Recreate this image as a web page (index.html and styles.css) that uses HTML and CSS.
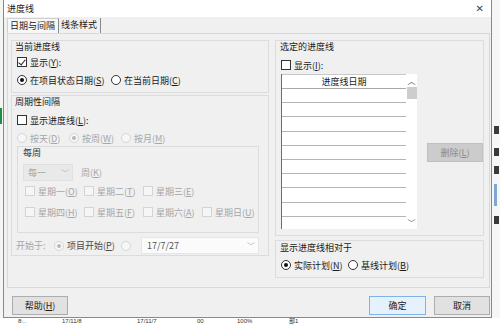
FILE: index.html
```html
<!DOCTYPE html>
<html lang="zh-CN">
<head>
    <meta charset="UTF-8">
    <title>进度线</title>
    <link rel="stylesheet" href="styles.css">
</head>
<body>

<div class="screen">
    <!-- 背景表格左侧 -->
    <div class="sheet-left"><span class="sel-mark"></span></div>

    <!-- 对话框 -->
    <div class="dialog">
        <div class="titlebar">
            <span>进度线</span>
            <span class="close">✕</span>
        </div>

        <div class="dlg-body">
            <div class="tabs">
                <div class="tab active">日期与间隔</div>
                <div class="tab">线条样式</div>
            </div>

            <div class="panel">
                <div class="col-left">
                    <div class="group g-current">
                        <div class="g-title">当前进度线</div>
                        <div class="row r-show"><span class="cb checked"></span>显示(<u>Y</u>):</div>
                        <div class="row r-date">
                            <span class="opt w94"><span class="rb on"></span>在项目状态日期(<u>S</u>)</span>
                            <span class="opt"><span class="rb"></span>在当前日期(<u>C</u>)</span>
                        </div>
                    </div>

                    <div class="group g-period">
                        <div class="g-title">周期性间隔</div>
                        <div class="row r-show2"><span class="cb"></span>显示进度线(<u>L</u>):</div>
                        <div class="row r-freq dim">
                            <span class="opt w52"><span class="rb off"></span>按天(<u>D</u>)</span>
                            <span class="opt w52"><span class="rb off on"></span>按周(<u>W</u>)</span>
                            <span class="opt"><span class="rb off"></span>按月(<u>M</u>)</span>
                        </div>

                        <div class="sub">
                            <div class="g-title">每周</div>
                            <div class="row r-every dim">
                                <span class="select">每一<span class="arrow">﹀</span></span>
                                <span>周(<u>K</u>)</span>
                            </div>
                            <div class="days dim">
                                <span class="opt"><span class="cb off"></span>星期一(<u>O</u>)</span>
                                <span class="opt"><span class="cb off"></span>星期二(<u>T</u>)</span>
                                <span class="opt"><span class="cb off"></span>星期三(<u>E</u>)</span>
                                <span></span>
                                <span class="opt"><span class="cb off"></span>星期四(<u>H</u>)</span>
                                <span class="opt"><span class="cb off"></span>星期五(<u>F</u>)</span>
                                <span class="opt"><span class="cb off"></span>星期六(<u>A</u>)</span>
                                <span class="opt"><span class="cb off"></span>星期日(<u>U</u>)</span>
                            </div>
                        </div>

                        <div class="row r-start">
                            <span class="dim w38">开始于:</span>
                            <span class="opt w68 grey"><span class="rb off on"></span>项目开始(<u>P</u>)</span>
                            <span class="rb off"></span>
                            <span class="datebox">17/7/27<span class="arrow">﹀</span></span>
                        </div>
                    </div>
                </div>

                <div class="col-right">
                    <div class="group g-sel">
                        <div class="g-title">选定的进度线</div>
                        <div class="row r-show3"><span class="cb"></span>显示(<u>I</u>):</div>
                        <div class="list-wrap">
                            <div class="list">
                                <div class="list-rows">
                                    <div class="list-head">进度线日期</div>
                                    <div class="list-row"></div>
                                    <div class="list-row"></div>
                                    <div class="list-row"></div>
                                    <div class="list-row"></div>
                                    <div class="list-row"></div>
                                    <div class="list-row"></div>
                                    <div class="list-row"></div>
                                    <div class="list-row"></div>
                                    <div class="list-row"></div>
                                    <div class="list-row last"></div>
                                </div>
                                <div class="scroll">
                                    <span class="s-up">︿</span>
                                    <span class="thumb"></span>
                                    <span class="s-down">﹀</span>
                                </div>
                            </div>
                            <div class="btn disabled">删除(<u>L</u>)</div>
                        </div>
                    </div>

                    <div class="group g-rel">
                        <div class="g-title">显示进度线相对于</div>
                        <div class="row r-rel">
                            <span class="opt w67"><span class="rb on"></span>实际计划(<u>N</u>)</span>
                            <span class="opt"><span class="rb"></span>基线计划(<u>B</u>)</span>
                        </div>
                    </div>
                </div>
            </div>

            <div class="buttons">
                <div class="btn">帮助(<u>H</u>)</div>
                <div class="btn-right">
                    <div class="btn default">确定</div>
                    <div class="btn">取消</div>
                </div>
            </div>
        </div>
    </div>

    <!-- 背景表格右侧 -->
    <div class="sheet-right">
        <span class="frag f1"></span>
        <span class="frag f2"></span>
        <span class="frag f3"></span>
        <span class="band"></span>
        <span class="frag f4"></span>
    </div>
</div>

<!-- 背景表格底部一行 -->
<div class="sheet-bottom">
    <span class="c1">8:..</span>
    <span class="c2">17/11/8</span>
    <span class="c3">17/11/7</span>
    <span class="c4">00</span>
    <span class="c5">100%</span>
    <span class="c6">部1</span>
</div>

</body>
</html>
```

FILE: styles.css
```css
/* 通用 */
* {
    box-sizing: border-box;
}

body {
    margin: 0;
    font-family: "Noto Sans CJK SC", "Microsoft YaHei", sans-serif;
    font-size: 9px;
    color: #1a1a1a;
    background: #fff;
    overflow: hidden;
}

u {
    text-decoration: underline;
    text-underline-offset: 1px;
}

.screen {
    display: flex;
    height: 318px;
}

/* 背景表格 */
.sheet-left {
    width: 3px;
    background: #f4f6f4;
    padding-top: 108px;
}

.sel-mark {
    display: block;
    width: 2px;
    height: 16px;
    background: #1e8c45;
}

.sheet-right {
    width: 8px;
    background: #f6f6f6;
    display: flex;
    flex-direction: column;
    padding: 126px 0 0 2px;
    gap: 10px;
}

.frag {
    display: block;
    width: 5px;
    height: 8px;
    background: #3a3a3a;
}

.f2 { margin-top: 4px; }

.band {
    display: block;
    width: 3px;
    height: 22px;
    background: #7ea7d4;
}

.sheet-bottom {
    height: 7px;
    display: flex;
    font-family: "Liberation Sans", "Noto Sans CJK SC", sans-serif;
    font-size: 6px;
    line-height: 7px;
    color: #333;
    padding-left: 18px;
}

.sheet-bottom span { display: block; }
.sheet-bottom .c1 { width: 44px; }
.sheet-bottom .c2 { width: 75px; }
.sheet-bottom .c3 { width: 60px; }
.sheet-bottom .c4 { width: 40px; }
.sheet-bottom .c5 { width: 52px; }

/* 对话框 */
.dialog {
    width: 489px;
    border: 1px solid #6f8fb2;
    border-top: none;
    display: flex;
    flex-direction: column;
    background: #f0f0f0;
}

.titlebar {
    height: 17px;
    background: #fff;
    display: flex;
    align-items: center;
    justify-content: space-between;
    padding: 0 7px 0 3px;
    font-size: 9px;
}

.close {
    font-size: 10px;
    color: #444;
    font-family: "DejaVu Sans", sans-serif;
}

.dlg-body {
    flex: 1;
    padding: 1px 1px 0 3px;
}

/* 选项卡 */
.tabs {
    display: flex;
    height: 15px;
}

.tab {
    line-height: 14px;
    padding: 0 3px 0 2px;
    border-right: 1px solid #8a8a8a;
    white-space: nowrap;
}

.tab.active {
    background: #f7f7f7;
    border-left: 1px solid #d0d0d0;
    border-top: 1px solid #d0d0d0;
}

.panel {
    height: 255px;
    border: 1px solid #d9d9d9;
    display: grid;
    grid-template-columns: 258px 209px;
    column-gap: 6px;
    align-items: start;
    padding: 6px 0 0 3px;
}

/* 分组框 */
.group {
    border: 1px solid #dcdcdc;
}

.g-title {
    height: 12px;
    line-height: 11px;
    padding-left: 3px;
}

.row {
    display: flex;
    align-items: center;
    height: 12px;
    padding-left: 5px;
}

.opt {
    display: flex;
    align-items: center;
}

.w94 { width: 94px; }
.w52 { width: 52px; }
.w38 { width: 38px; }
.w68 { width: 68px; }
.w67 { width: 67px; }

.dim { color: #a6a6a6; }
.grey { color: #4a4a4a; }

/* 复选框与单选框 */
.cb {
    width: 10px;
    height: 10px;
    border: 1px solid #333;
    background: #fff;
    margin-right: 3px;
    position: relative;
    flex: none;
}

.cb.checked::after {
    content: "";
    position: absolute;
    left: 2px;
    top: 0;
    width: 3px;
    height: 6px;
    border-right: 1px solid #222;
    border-bottom: 1px solid #222;
    transform: rotate(40deg);
}

.cb.off {
    border-color: #d4d4d4;
    background: #f6f6f6;
}

.rb {
    width: 10px;
    height: 10px;
    border: 1px solid #333;
    border-radius: 50%;
    background: #fff;
    margin-right: 3px;
    position: relative;
    flex: none;
}

.rb.on::after {
    content: "";
    position: absolute;
    left: 2px;
    top: 2px;
    width: 4px;
    height: 4px;
    border-radius: 50%;
    background: #111;
}

.rb.off {
    border-color: #d6d6d6;
    background: #f7f7f7;
}

.rb.off.on::after {
    background: #b8b8b8;
}

/* 当前进度线 */
.g-current {
    height: 53px;
}

.r-show { margin-top: 3px; }
.r-date { margin-top: 6px; }

/* 周期性间隔 */
.g-period {
    margin-top: 2px;
    height: 161px;
}

.r-show2 { margin-top: 6px; }
.r-freq { margin-top: 6px; }

.sub {
    margin: 2px 9px 0 5px;
    height: 87px;
    border: 1px solid #dcdcdc;
}

.sub .g-title {
    padding-left: 5px;
    color: #333;
}

.r-every {
    margin-top: 5px;
    height: 17px;
    padding-left: 5px;
    gap: 8px;
}

.select {
    width: 50px;
    height: 17px;
    background: #e9e9e9;
    border: 1px solid #e0e0e0;
    display: flex;
    align-items: center;
    justify-content: space-between;
    padding: 0 3px 0 4px;
}

.arrow {
    font-size: 8px;
    color: #b0b0b0;
}

.days {
    display: grid;
    grid-template-columns: 59px 59px 59px 59px;
    row-gap: 9px;
    margin-top: 4px;
    padding-left: 7px;
}

.days .opt {
    height: 12px;
}

.r-start {
    margin-top: 4px;
    height: 17px;
    padding-left: 4px;
}

.r-start > .rb.off {
    margin-right: 10px;
    margin-left: -1px;
}

.datebox {
    width: 118px;
    height: 17px;
    background: #fbfbfb;
    border: 1px solid #e6e6e6;
    display: flex;
    align-items: center;
    justify-content: space-between;
    padding: 0 3px 0 5px;
    color: #555;
}

/* 选定的进度线 */
.g-sel {
    height: 196px;
}

.g-sel .g-title { padding-left: 4px; }

.r-show3 {
    margin-top: 6px;
}

.list-wrap {
    display: flex;
    align-items: flex-start;
    padding-left: 5px;
    margin-top: 3px;
}

.list {
    width: 136px;
    height: 155px;
    display: flex;
    background: #fff;
    border-left: 1px solid #6e6e6e;
}

.list-rows {
    flex: 1;
}

.list-head {
    height: 15px;
    line-height: 14px;
    text-align: center;
    border-bottom: 1px solid #a8a8a8;
    border-top: 1px solid #c8c8c8;
}

.list-row {
    height: 14.2px;
    border-bottom: 1px solid #b4b4b4;
}

.list-row.last {
    border-bottom: none;
}

.scroll {
    width: 11px;
    display: flex;
    flex-direction: column;
    align-items: center;
    background: #fff;
}

.s-up, .s-down {
    font-size: 8px;
    line-height: 13px;
    height: 13px;
    color: #555;
}

.thumb {
    width: 10px;
    height: 12px;
    background: #cdcdcd;
    flex: none;
}

.s-down {
    margin-top: auto;
}

/* 按钮 */
.btn {
    width: 56px;
    height: 19px;
    display: flex;
    align-items: center;
    justify-content: center;
    background: #e1e1e1;
    border: 1px solid #adadad;
}

.btn.disabled {
    margin: 69px 0 0 10px;
    background: #cccccc;
    border-color: #bfbfbf;
    color: #8a8a8a;
}

.btn.default {
    width: 57px;
    background: #e5f1fb;
    border-color: #7eb4ea;
}

/* 相对于 */
.g-rel {
    margin-top: 4px;
    height: 38px;
}

.g-rel .g-title {
    padding-left: 4px;
    margin-top: 1px;
}

.r-rel {
    margin-top: 5px;
}

.buttons {
    display: flex;
    justify-content: space-between;
    margin-top: 8px;
    padding-left: 5px;
}

.btn-right {
    display: flex;
    gap: 8px;
}
```
